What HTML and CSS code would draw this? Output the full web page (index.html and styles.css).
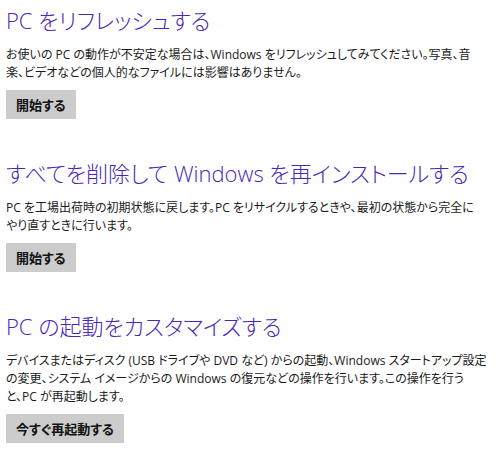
FILE: index.html
```html
<!DOCTYPE html>
<html lang="ja">
<head>
<meta charset="utf-8">
<link rel="stylesheet" href="styles.css">
</head>
<body>
<main class="page">
  <section class="section">
    <h2 class="title">PC をリフレッシュする</h2>
    <p class="desc">お使いの PC の動作が不安定な場合は、Windows をリフレッシュしてみてください。写真、音<br>楽、ビデオなどの個人的なファイルには影響はありません。</p>
    <button class="btn">開始する</button>
  </section>
  <section class="section">
    <h2 class="title">すべてを削除して Windows を再インストールする</h2>
    <p class="desc">PC を工場出荷時の初期状態に戻します。PC をリサイクルするときや、最初の状態から完全に<br>やり直すときに行います。</p>
    <button class="btn">開始する</button>
  </section>
  <section class="section">
    <h2 class="title">PC の起動をカスタマイズする</h2>
    <p class="desc">デバイスまたはディスク (USB ドライブや DVD など) からの起動、Windows スタートアップ設定<br>の変更、システム イメージからの Windows の復元などの操作を行います。この操作を行う<br>と、PC が再起動します。</p>
    <button class="btn">今すぐ再起動する</button>
  </section>
</main>
</body>
</html>
```

FILE: styles.css
```css
html, body {
  margin: 0;
  padding: 0;
  background: #ffffff;
}

.page {
  display: flex;
  flex-direction: column;
  gap: 39px;
  padding: 5px 0 0 6px;
  font-family: "Open Sans", "Noto Sans CJK JP", sans-serif;
  font-feature-settings: "palt";
  color: #1a1a1a;
}

.section {
  display: flex;
  flex-direction: column;
  align-items: flex-start;
}

.title {
  margin: 0;
  font-size: 22px;
  font-weight: 300;
  line-height: 30px;
  color: #4a27b6;
  white-space: nowrap;
}

.desc {
  margin: 11px 0 0 0;
  font-size: 12px;
  line-height: 18px;
  white-space: nowrap;
}

.btn {
  margin-top: 8px;
  height: 29px;
  padding: 0 10px;
  border: none;
  background: #cccccc;
  color: #111;
  font-family: "Open Sans", "Noto Sans CJK JP", sans-serif;
  font-feature-settings: "palt";
  font-size: 13px;
  font-weight: 700;
}
```
